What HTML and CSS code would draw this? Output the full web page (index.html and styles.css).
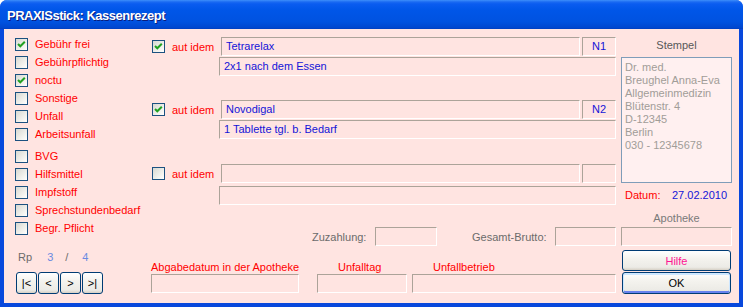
FILE: index.html
```html
<!DOCTYPE html>
<html lang="de">
<head>
  <meta charset="UTF-8">
  <title>PRAXISstick: Kassenrezept</title>
  <link rel="stylesheet" href="styles.css">
</head>
<body>
<div class="window">
  <div class="titlebar"><span class="title">PRAXISstick: Kassenrezept</span></div>
  <div class="client">

    <div class="col-left">
      <div class="checks">
        <div class="check"><span class="box on"><svg viewBox="0 0 11 11"><path d="M2 5 L4.3 7.3 L8.8 2.8"/></svg></span>Gebühr frei</div>
        <div class="check"><span class="box"></span>Gebührpflichtig</div>
        <div class="check"><span class="box on"><svg viewBox="0 0 11 11"><path d="M2 5 L4.3 7.3 L8.8 2.8"/></svg></span>noctu</div>
        <div class="check"><span class="box"></span>Sonstige</div>
        <div class="check"><span class="box"></span>Unfall</div>
        <div class="check"><span class="box"></span>Arbeitsunfall</div>
      </div>
      <div class="checks second">
        <div class="check"><span class="box"></span>BVG</div>
        <div class="check"><span class="box"></span>Hilfsmittel</div>
        <div class="check"><span class="box"></span>Impfstoff</div>
        <div class="check"><span class="box"></span>Sprechstundenbedarf</div>
        <div class="check"><span class="box"></span>Begr. Pflicht</div>
      </div>
      <div class="rp">Rp <span class="num">3</span><span class="slash">/</span><span class="num">4</span></div>
      <div class="nav">
        <button class="btn nav-btn">|&lt;</button>
        <button class="btn nav-btn">&lt;</button>
        <button class="btn nav-btn">&gt;</button>
        <button class="btn nav-btn">&gt;|</button>
      </div>
    </div>

    <div class="col-mid">
      <div class="rezept">
        <div class="rz-row">
          <span class="box on"><svg viewBox="0 0 11 11"><path d="M2 5 L4.3 7.3 L8.8 2.8"/></svg></span>
          <span class="aut">aut idem</span>
          <div class="field grow">Tetrarelax</div>
          <div class="field size">N1</div>
        </div>
        <div class="field dose">2x1 nach dem Essen</div>
      </div>
      <div class="rezept">
        <div class="rz-row">
          <span class="box on"><svg viewBox="0 0 11 11"><path d="M2 5 L4.3 7.3 L8.8 2.8"/></svg></span>
          <span class="aut">aut idem</span>
          <div class="field grow">Novodigal</div>
          <div class="field size">N2</div>
        </div>
        <div class="field dose">1 Tablette tgl. b. Bedarf</div>
      </div>
      <div class="rezept last">
        <div class="rz-row">
          <span class="box"></span>
          <span class="aut">aut idem</span>
          <div class="field grow"></div>
          <div class="field size"></div>
        </div>
        <div class="field dose"></div>
      </div>

      <div class="sum-row">
        <span class="sum-label zuz">Zuzahlung:</span>
        <div class="field zuz-field"></div>
        <span class="sum-label brutto">Gesamt-Brutto:</span>
        <div class="field brutto-field"></div>
      </div>

      <div class="bottom-row">
        <div class="bgroup abgabe">
          <span class="blabel">Abgabedatum in der Apotheke</span>
          <div class="field"></div>
        </div>
        <div class="bgroup unfalltag">
          <span class="blabel">Unfalltag</span>
          <div class="field"></div>
        </div>
        <div class="bgroup betrieb">
          <span class="blabel">Unfallbetrieb</span>
          <div class="field"></div>
        </div>
      </div>
    </div>

    <div class="col-right">
      <div class="stempel-label">Stempel</div>
      <div class="stempel">
        Dr. med.<br>
        Breughel Anna-Eva<br>
        Allgemeinmedizin<br>
        Blütenstr. 4<br>
        D-12345<br>
        Berlin<br>
        030 - 12345678
      </div>
      <div class="datum"><span class="datum-label">Datum:</span><span class="datum-value">27.02.2010</span></div>
      <div class="apo-label">Apotheke</div>
      <div class="field apo-field"></div>
      <button class="btn wide hilfe">Hilfe</button>
      <button class="btn wide ok">OK</button>
    </div>

  </div>
</div>
</body>
</html>
```

FILE: styles.css
```css
html, body {
  margin: 0;
  padding: 0;
  background: #ffffff;
}
body {
  font-family: "Liberation Sans", Arial, sans-serif;
  font-size: 11px;
}
.window {
  width: 743px;
  height: 307px;
  box-sizing: border-box;
  border-radius: 7px 7px 0 0;
  background: #0848dc;
  display: flex;
  flex-direction: column;
  overflow: hidden;
}
.titlebar {
  height: 29px;
  flex: none;
  background: linear-gradient(#3d8ffb 0, #1a6af2 2px, #0a5cf0 4px, #0056e8 35%, #0052e0 75%, #0047cf 95%, #003fbf 100%);
  display: flex;
  align-items: center;
  padding-left: 7px;
}
.title {
  color: #ffffff;
  font-weight: bold;
  font-size: 13px;
  letter-spacing: -0.5px;
  text-shadow: 1px 1px 0 #0a1c7c;
  margin-top: 1px;
}
.client {
  flex: none;
  height: 274px;
  margin: 0 4px;
  background: #ffe4e1;
  display: grid;
  grid-template-columns: 136px 465px 116px;
  padding-left: 11px;
  box-sizing: border-box;
  white-space: nowrap;
}

/* left column */
.col-left {
  padding-top: 6px;
}
.checks {
  display: flex;
  flex-direction: column;
}
.checks.second {
  margin-top: 4px;
}
.check {
  height: 18px;
  display: flex;
  align-items: center;
  color: #ff0000;
}
.box {
  width: 11px;
  height: 11px;
  flex: none;
  border: 1px solid #1c5180;
  background: linear-gradient(135deg, #d8d8d2 0%, #f4f4f0 70%, #ffffff 100%);
  margin-right: 7px;
  display: inline-flex;
}
.box svg {
  width: 11px;
  height: 11px;
}
.box svg path {
  fill: none;
  stroke: #21a121;
  stroke-width: 2;
}
.rp {
  margin-top: 13px;
  height: 14px;
  line-height: 14px;
  color: #6b6b6b;
  padding-left: 3px;
}
.rp .num {
  color: #6a8ae2;
  margin-left: 12px;
}
.rp .slash {
  margin-left: 12px;
}
.rp .num + .slash + .num {
  margin-left: 14px;
}
.nav {
  margin-top: 8px;
  margin-left: 1px;
  display: flex;
  gap: 1px;
}
.btn {
  font-family: "Liberation Sans", Arial, sans-serif;
  font-size: 11px;
  border: 1px solid #003c74;
  border-radius: 3px;
  background: linear-gradient(#ffffff 0%, #f4f3ee 40%, #ecebe6 85%, #d6d0c5 100%);
  padding: 0;
  color: #000000;
}
.nav-btn {
  width: 21px;
  height: 22px;
}

/* middle column */
.col-mid {
  padding-top: 8px;
  display: flex;
  flex-direction: column;
}
.rezept {
  display: flex;
  flex-direction: column;
  gap: 1px;
  margin-bottom: 24px;
}
.rezept.last {
  gap: 3px;
  margin-top: 1px;
  margin-bottom: 22px;
}
.rz-row {
  display: flex;
  align-items: center;
  gap: 2px;
}
.rz-row .box {
  margin-left: 1px;
  margin-right: 5px;
}
.aut {
  width: 47px;
  color: #ff0000;
}
.field {
  height: 19px;
  box-sizing: border-box;
  border-top: 1px solid #aca399;
  border-left: 1px solid #aca399;
  border-bottom: 1px solid #ffffff;
  border-right: 1px solid #ffffff;
  color: #1414d8;
  line-height: 17px;
  padding-left: 4px;
}
.field.grow {
  flex: 1;
}
.field.size {
  width: 34px;
  padding-left: 0;
  text-align: center;
}
.field.dose {
  margin-left: 68px;
}
.sum-row {
  display: flex;
  align-items: center;
  height: 19px;
}
.sum-label {
  color: #6b6b6b;
}
.sum-label.zuz {
  margin-left: 161px;
  width: 63px;
}
.zuz-field {
  width: 62px;
}
.sum-label.brutto {
  margin-left: 35px;
  width: 83px;
}
.brutto-field {
  width: 61px;
}
.bottom-row {
  margin-top: 14px;
  display: flex;
}
.bgroup {
  display: flex;
  flex-direction: column;
}
.blabel {
  color: #ff0000;
  height: 14px;
  line-height: 14px;
}
.bgroup.abgabe {
  width: 148px;
}
.bgroup.unfalltag {
  width: 90px;
  margin-left: 18px;
}
.bgroup.betrieb {
  width: 204px;
  margin-left: 5px;
}
.bgroup.unfalltag .blabel,
.bgroup.betrieb .blabel {
  padding-left: 21px;
}

/* right column */
.col-right {
  margin-left: 5px;
  padding-top: 9px;
  display: flex;
  flex-direction: column;
}
.stempel-label {
  height: 14px;
  line-height: 14px;
  text-align: center;
  color: #585858;
  margin-bottom: 5px;
}
.stempel {
  height: 126px;
  box-sizing: border-box;
  border: 1px solid #7f9db9;
  background: #fff0f0;
  color: #a19d98;
  line-height: 13px;
  padding: 3px 0 0 3px;
}
.datum {
  margin-top: 5px;
  height: 14px;
  line-height: 14px;
  padding-left: 4px;
}
.datum-label {
  color: #ff0000;
  display: inline-block;
  width: 47px;
}
.datum-value {
  color: #1414d8;
}
.apo-label {
  margin-top: 9px;
  height: 14px;
  line-height: 14px;
  text-align: center;
  color: #7a7a7a;
}
.apo-field {
  margin-top: 2px;
}
.btn.wide {
  margin: 4px 1px 0 1px;
  height: 21px;
}
.btn.wide.ok {
  margin-top: 1px;
  height: 22px;
  box-shadow: inset 0 1px 0 1px #cee7ff, inset 0 -1px 0 1px #6982ee;
}
.hilfe {
  color: #ff1493;
}
```
